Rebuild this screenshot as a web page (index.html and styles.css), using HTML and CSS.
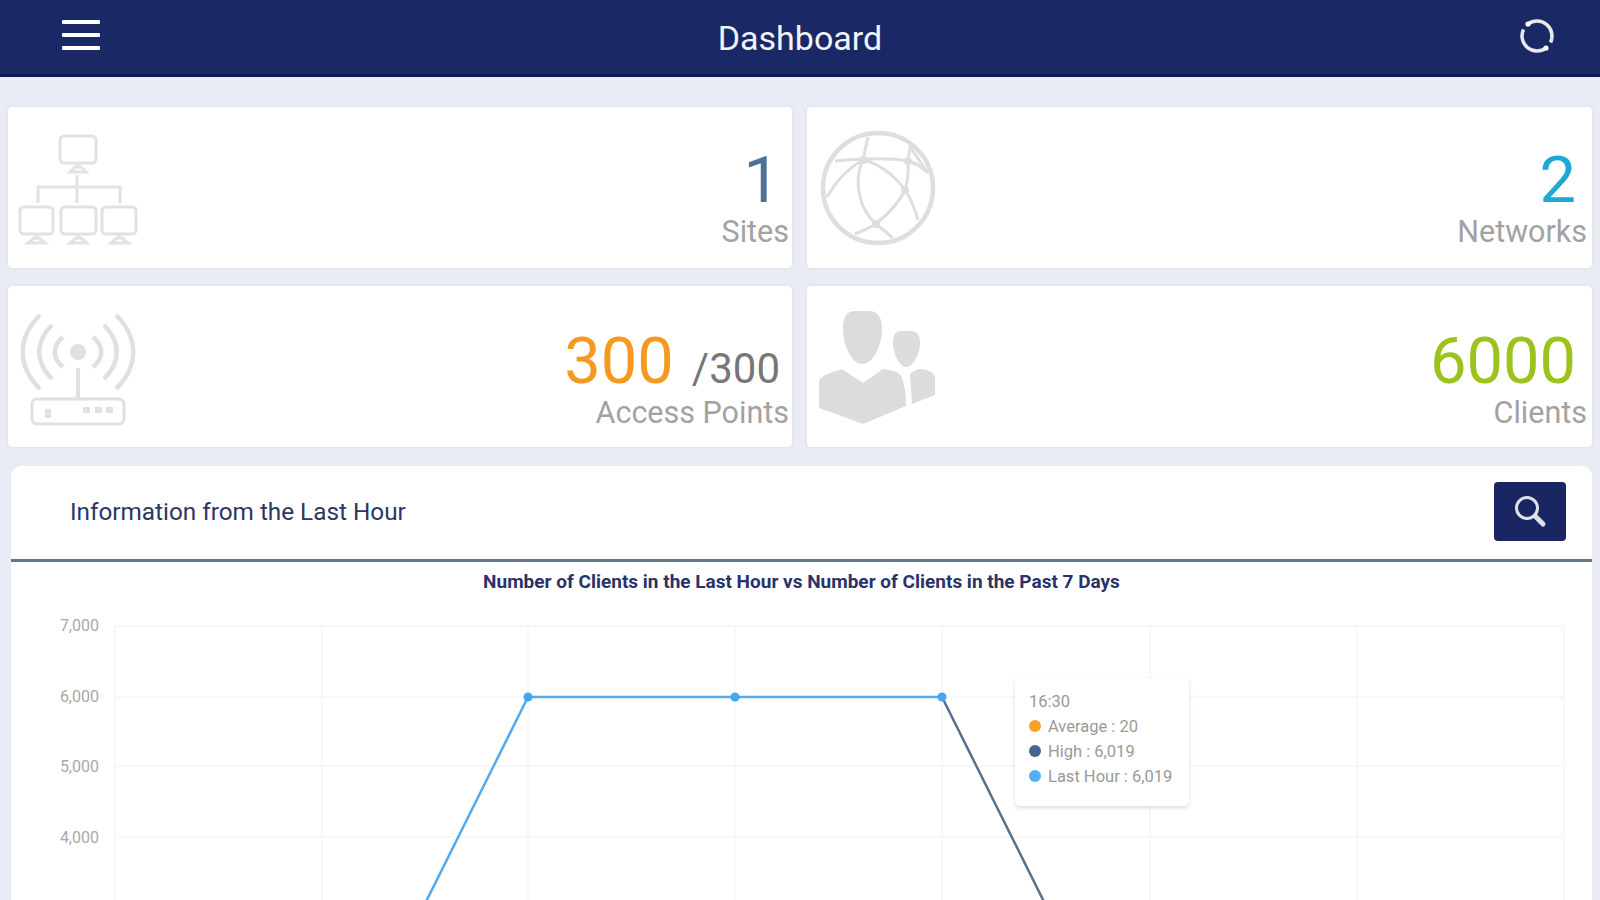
FILE: index.html
```html
<!DOCTYPE html>
<html lang="en">
<head>
  <meta charset="UTF-8">
  <title>Dashboard</title>
  <link rel="stylesheet" href="styles.css">
</head>
<body>

  <header class="topbar">
    <div class="menu-icon"><span></span><span></span><span></span></div>
    <h1>Dashboard</h1>
    <svg class="refresh-icon" width="36" height="36" viewBox="0 0 36 36" fill="none" stroke="#e8e8ee" stroke-width="3.5">
      <path d="M9 6 A15 15 0 0 1 31.500 24.500"/>
      <path d="M27 30 A15 15 0 0 1 4.500 11.500"/>
      <circle cx="9" cy="6" r="2.6" fill="#fff" stroke="none"/>
      <circle cx="27" cy="30" r="2.6" fill="#fff" stroke="none"/>
    </svg>
  </header>

  <main class="content">
    <section class="cards">

      <div class="card">
        <svg class="card-icon" width="122" height="116" viewBox="0 0 122 116" fill="none" stroke="#e2e2e2" stroke-width="3">
          <rect x="42" y="5" width="36" height="27" rx="4"/>
          <path d="M60 32 v4 M52 41 l5 -5 h6 l5 5 z"/>
          <path d="M59 44 v28 M20 72 v-16 h82 v16"/>
          <rect x="2" y="76" width="33" height="27" rx="4"/>
          <path d="M18.500 103 v4 M10 112 l6 -5 h5 l6 5 z"/>
          <rect x="43" y="76" width="35" height="27" rx="4"/>
          <path d="M60.500 103 v4 M52 112 l6 -5 h5 l6 5 z"/>
          <rect x="84" y="76" width="34" height="27" rx="4"/>
          <path d="M101 103 v4 M93 112 l6 -5 h5 l6 5 z"/>
        </svg>
        <div class="stat">
          <div class="stat-value blue">1</div>
          <div class="stat-label">Sites</div>
        </div>
      </div>

      <div class="card">
        <svg class="card-icon" width="122" height="122" viewBox="0 0 122 122" fill="none" stroke="#dedede" stroke-width="3">
          <circle cx="61" cy="57" r="55" stroke-width="4.500"/>
          <path d="M18 30 C40 28 70 26 91 30 C98 32 105 36 111 42"/>
          <path d="M46 29 L51 6 M46 29 C30 38 18 52 10 66"/>
          <path d="M46 29 C36 50 42 78 59 93 M46 29 C62 32 78 45 88 59"/>
          <path d="M91 30 C92 45 90 52 88 59 M91 30 L93 16 L111 42"/>
          <path d="M88 59 C82 72 70 84 59 93 M88 59 C94 68 98 78 101 89"/>
          <path d="M59 93 C52 97 46 100 38 103 M59 93 L76 107"/>
          <circle cx="46" cy="29" r="4" fill="#dedede" stroke="none"/>
          <circle cx="91" cy="30" r="4" fill="#dedede" stroke="none"/>
          <circle cx="88" cy="59" r="4" fill="#dedede" stroke="none"/>
          <circle cx="59" cy="93" r="4" fill="#dedede" stroke="none"/>
        </svg>
        <div class="stat">
          <div class="stat-value cyan">2</div>
          <div class="stat-label">Networks</div>
        </div>
      </div>

      <div class="card">
        <svg class="card-icon" width="122" height="122" viewBox="0 0 122 122" fill="none" stroke="#e0e0e0" stroke-width="4.500">
          <circle cx="60" cy="42" r="8" fill="#e0e0e0" stroke="none"/>
          <path d="M45 27 C34 36 34 48 45 57 M75 27 C86 36 86 48 75 57"/>
          <path d="M34 15 C17 32 17 52 34 69 M86 15 C103 32 103 52 86 69"/>
          <path d="M22 5 C-1 28 -1 56 22 79 M98 5 C121 28 121 56 98 79"/>
          <path d="M60 58 v31" stroke-width="4"/>
          <rect x="14" y="89" width="92" height="25" rx="5" stroke-width="3"/>
          <rect x="27" y="99" width="6" height="9" fill="#e0e0e0" stroke="none"/>
          <rect x="65" y="97" width="7" height="6" fill="#e0e0e0" stroke="none"/>
          <rect x="77" y="97" width="7" height="6" fill="#e0e0e0" stroke="none"/>
          <rect x="88" y="97" width="7" height="6" fill="#e0e0e0" stroke="none"/>
        </svg>
        <div class="stat">
          <div class="stat-value">
            <span class="orange">300</span><span class="stat-total">/300</span>
          </div>
          <div class="stat-label">Access Points</div>
        </div>
      </div>

      <div class="card">
        <svg class="card-icon" width="122" height="122" viewBox="0 0 122 122" fill="#dcdcdc">
          <path d="M38 1 C30 1 26 7 26 18 C26 36 35 54 45 54 C56 54 65 36 65 18 C65 7 60 1 52 1 Z"/>
          <path d="M85 21 C78 21 76 25 76 33 C76 44 83 57 89 57 C96 57 103 44 103 33 C103 25 100 21 94 21 Z"/>
          <path d="M2 71 C4 66 14 62 25 59 L46 73 L66 59 C76 60 84 63 85 68 C88 76 89 86 89 96 L46 114 L2 98 Z"/>
          <path d="M93 64 C96 61 100 59 105 59 C112 60 118 63 118 68 L118 85 L95 94 Z"/>
        </svg>
        <div class="stat">
          <div class="stat-value lime">6000</div>
          <div class="stat-label">Clients</div>
        </div>
      </div>

    </section>

    <section class="panel">
      <div class="panel-head">
        <h2>Information from the Last Hour</h2>
        <button class="search-btn">
          <svg width="36" height="36" viewBox="0 0 36 36" fill="none" stroke="#dfe0e6" stroke-width="3">
            <circle cx="15" cy="14" r="10.5"/>
            <path d="M23 22 L31 30" stroke-width="5" stroke-linecap="round"/>
          </svg>
        </button>
      </div>

      <div class="chart">
        <h3>Number of Clients in the Last Hour vs Number of Clients in the Past 7 Days</h3>
        <svg class="chart-svg" width="1581" height="400" viewBox="0 0 1581 400">
          <g class="grid">
            <path d="M104 34 H1553 M104 105 H1553 M104 174 H1553 M104 245 H1553"/>
            <path d="M104 34 V400 M311 34 V400 M517 34 V400 M724 34 V400 M931 34 V400 M1139 34 V400 M1346 34 V400 M1553 34 V400"/>
          </g>
          <g class="axis">
            <text x="88" y="39">7,000</text>
            <text x="88" y="110">6,000</text>
            <text x="88" y="180">5,000</text>
            <text x="88" y="251">4,000</text>
          </g>
          <path class="line-high" d="M931 105 L1078 400"/>
          <path class="line-last" d="M370 400 L517 105 L931 105"/>
          <circle class="dot" cx="517" cy="105" r="4.5"/>
          <circle class="dot" cx="724" cy="105" r="4.5"/>
          <circle class="dot" cx="931" cy="105" r="4.5"/>
        </svg>
        <div class="tooltip">
          <div class="tooltip-time">16:30</div>
          <div class="tooltip-row"><i class="orange-dot"></i>Average : 20</div>
          <div class="tooltip-row"><i class="navy-dot"></i>High : 6,019</div>
          <div class="tooltip-row"><i class="sky-dot"></i>Last Hour : 6,019</div>
        </div>
      </div>
    </section>
  </main>

</body>
</html>
```

FILE: styles.css
```css
html, body {
  margin: 0;
  height: 900px;
  overflow: hidden;
}

body {
  background: #e9ecf5;
  font-family: Roboto, "Liberation Sans", sans-serif;
}

.topbar {
  display: grid;
  grid-template-columns: 1fr auto 1fr;
  align-items: center;
  height: 74px;
  padding: 0 62px;
  background: #1a2966;
  border-bottom: 3px solid #0c1a58;
  color: #f2f3f7;
}

.topbar h1 {
  margin: 0;
  font-size: 34px;
  font-weight: 400;
  padding-top: 2px;
}

.menu-icon {
  display: flex;
  flex-direction: column;
  gap: 9px;
  width: 38px;
  margin-top: -4px;
}

.menu-icon span {
  height: 4px;
  background: #fff;
  border-radius: 1px;
}

.refresh-icon {
  justify-self: end;
  margin: -2px -17px 0 0;
}

.content {
  padding: 30px 8px 0;
}

.cards {
  display: grid;
  grid-template-columns: 784px 785px;
  grid-auto-rows: 161px;
  gap: 18px 15px;
}

.card {
  display: flex;
  justify-content: space-between;
  align-items: flex-start;
  background: #fff;
  border-radius: 4px;
  box-shadow: 0 0 3px #d5d8e0;
  padding: 0 3px 0 10px;
}

.card:nth-child(even) {
  padding-right: 5px;
}

.card-icon {
  margin-top: 24px;
  overflow: visible;
}

.stat {
  text-align: right;
  padding-top: 39px;
}

.card:nth-child(n+3) .stat {
  padding-top: 41px;
}

.stat-value {
  height: 68px;
  font-size: 65px;
  line-height: 68px;
  padding-right: 9px;
}

.card:nth-child(even) .stat-value {
  padding-right: 11px;
}

.stat-label {
  font-size: 30.5px;
  line-height: 36px;
  color: #a2a2a2;
}

.stat-total {
  font-size: 42px;
  line-height: 1;
  color: #777;
  margin-left: 18px;
}

.blue { color: #4f6f97; }
.cyan { color: #1ea9d2; }
.orange { color: #f59a1e; }
.lime { color: #9cc31c; }

.panel {
  position: relative;
  margin: 19px 0 0 3px;
  width: 1581px;
  background: #fff;
  border-radius: 10px 10px 0 0;
}

.panel-head {
  display: flex;
  align-items: center;
  justify-content: space-between;
  height: 93px;
  padding: 0 26px 0 59px;
  border-bottom: 3px solid #667587;
}

.panel-head h2 {
  margin: -2px 0 0;
  font-size: 24.3px;
  font-weight: 400;
  color: #2c3763;
}

.search-btn {
  display: flex;
  align-items: center;
  justify-content: center;
  width: 72px;
  height: 59px;
  margin-top: -2px;
  padding: 0;
  border: none;
  border-radius: 4px;
  background: #1a2664;
}

.chart {
  position: relative;
}

.chart h3 {
  margin: 0;
  padding-top: 10px;
  font-size: 19px;
  line-height: 20px;
  font-weight: 700;
  text-align: center;
  color: #2a3268;
}

.chart-svg {
  display: block;
}

.grid path {
  fill: none;
  stroke: #f6f6f7;
  stroke-width: 1.5;
}

.axis text {
  font-size: 16px;
  fill: #a9a9a9;
  text-anchor: end;
}

.line-last {
  fill: none;
  stroke: #55a9ee;
  stroke-width: 2.5;
}

.line-high {
  fill: none;
  stroke: #56708f;
  stroke-width: 2.5;
}

.dot {
  fill: #45a5f0;
}

.tooltip {
  position: absolute;
  left: 1004px;
  top: 116px;
  width: 174px;
  height: 128px;
  box-sizing: border-box;
  padding: 14px 14px;
  background: #fff;
  border-radius: 5px;
  box-shadow: 0 2px 4px rgba(0,0,0,0.14);
  font-size: 16.5px;
  color: #9a9a9a;
}

.tooltip-time {
  line-height: 20px;
  margin-bottom: 1.5px;
}

.tooltip-row {
  display: flex;
  align-items: center;
  gap: 7px;
  height: 25px;
}

.tooltip-row i {
  width: 12px;
  height: 12px;
  border-radius: 50%;
}

.orange-dot { background: #f9a028; }
.navy-dot { background: #46648f; }
.sky-dot { background: #55aef5; }
```
